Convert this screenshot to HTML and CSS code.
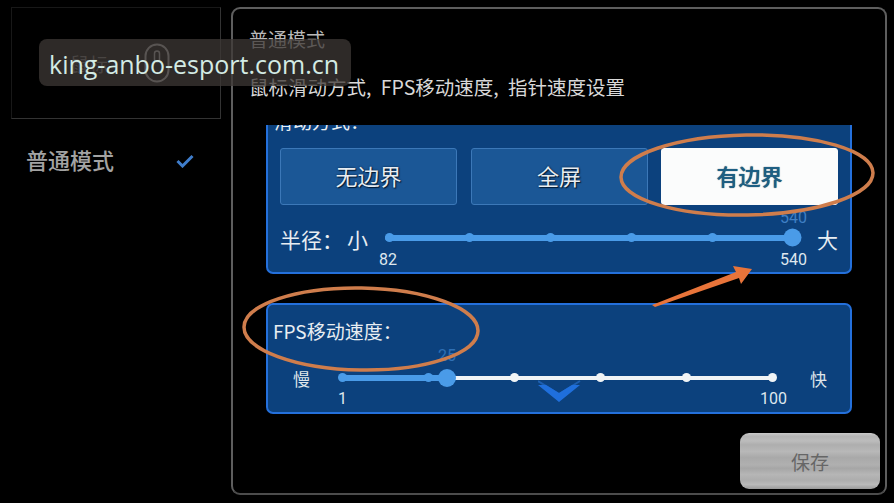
FILE: index.html
```html
<!DOCTYPE html>
<html lang="zh">
<head>
<meta charset="utf-8">
<title>普通模式</title>
<link rel="stylesheet" href="styles.css">
</head>
<body>
<div class="page">
  <aside class="side">
    <div class="side-box">
      <span class="side-box-label">鼠标</span>
      <svg class="mouse-icon" width="26" height="40" viewBox="0 0 26 40"><rect x="1.5" y="1.5" width="23" height="37" rx="11.5" fill="none" stroke="#a8a8a8" stroke-width="2"/><rect x="10.5" y="8" width="5" height="11" rx="2.5" fill="none" stroke="#a8a8a8" stroke-width="1.5"/></svg>
    </div>
    <div class="side-item">
      <span>普通模式</span>
      <svg width="18" height="14" viewBox="0 0 18 14"><path d="M1.5 7 L6.5 12 L16.5 2" fill="none" stroke="#3f7dcb" stroke-width="3"/></svg>
    </div>
  </aside>
  <main class="panel">
    <header class="panel-head">
      <h1 class="panel-title">普通模式</h1>
      <p class="panel-desc">鼠标滑动方式, FPS移动速度, 指针速度设置</p>
    </header>
    <div class="scroll">
      <section class="card card-mode">
        <div class="card-label">滑动方式：</div>
        <div class="mode-buttons">
          <div class="mode-btn">无边界</div>
          <div class="mode-btn">全屏</div>
          <div class="mode-btn mode-btn-on">有边界</div>
        </div>
        <div class="slider-grid radius-grid">
          <div class="slider-side radius-side"><span>半径：</span><span>小</span></div>
          <div class="track track-blue">
            <i class="tick"></i><i class="tick"></i><i class="tick"></i><i class="tick"></i><i class="tick"></i><i class="tick tick-end"></i>
            <span class="bubble bubble-end">540</span>
          </div>
          <div class="slider-end">大</div>
          <div class="values radius-values"><span>82</span><span>540</span></div>
        </div>
      </section>
      <section class="card card-fps">
        <svg class="chevron" width="44" height="24" viewBox="0 0 44 24"><path d="M0 1 L21 14 L42 1" fill="none" stroke="#1d5fb0" stroke-width="2"/><path d="M0 5 L21 22 L42 5 L34 5 L21 13 L8 5 Z" fill="#1f6fdc"/></svg>
        <div class="card-label fps-label">FPS移动速度：</div>
        <div class="slider-grid fps-grid">
          <div class="slider-side slow">慢</div>
          <div class="track track-white">
            <div class="track-fill" style="width:105px"></div>
            <i class="tick tick-b"></i><i class="tick tick-b"></i><i class="tick"></i><i class="tick"></i><i class="tick"></i><i class="tick"></i>
            <i class="knob" style="left:105px"></i>
            <span class="bubble bubble-fps" style="left:105px">25</span>
          </div>
          <div class="slider-end fast">快</div>
          <div class="values fps-values"><span>1</span><span>100</span></div>
        </div>
      </section>
      <div class="save-row"><div class="save-btn">保存</div></div>
    </div>
  </main>
</div>
<svg class="annotations" width="894" height="503" viewBox="0 0 894 503">
  <ellipse cx="747" cy="175" rx="126" ry="40" fill="none" stroke="#cf7d4c" stroke-width="3.5" transform="rotate(-1 747 175)"/>
  <ellipse cx="361" cy="329" rx="117" ry="41" fill="none" stroke="#cf7d4c" stroke-width="3.5" transform="rotate(1 361 329)"/>
  <path d="M652 305 L736 272 L733 266 L752 269 L741 284 L739 278 L655 307 Z" fill="#e8743a"/>
</svg>
<div class="watermark">king-anbo-esport.com.cn</div>
</body>
</html>
```

FILE: styles.css
```css
* { box-sizing: border-box; }
html, body { margin: 0; padding: 0; }
body {
  width: 894px;
  height: 503px;
  overflow: hidden;
  position: relative;
  background: #000;
  color: #e6e9ec;
  font-family: "Noto Sans CJK SC", "Noto Sans", sans-serif;
}
.page {
  display: flex;
  gap: 10px;
  width: 894px;
  height: 503px;
  padding: 7px 7px 8px 11px;
}
.side { width: 210px; flex: none; }
.side-box {
  height: 112px;
  border: 1px solid #181818;
  border-right-color: #333;
  border-bottom-color: #333;
  display: flex;
  align-items: center;
  padding: 0 0 0 58px;
  gap: 36px;
  color: #6d6d6d;
  font-size: 19px;
}
.mouse-icon { flex: none; }
.side-item {
  margin-top: 27px;
  padding: 0 27px 0 15px;
  display: flex;
  align-items: center;
  justify-content: space-between;
  font-size: 22px;
  line-height: 26px;
  font-weight: 500;
  color: #a3a3a3;
}
.side-item svg { margin-top: 4px; }
.panel {
  flex: 1;
  min-width: 0;
  border: 2px solid #5e5e5e;
  border-bottom-color: #4c4c4c;
  border-radius: 9px;
  display: flex;
  flex-direction: column;
}
.panel-head { height: 116px; flex: none; padding: 18px 0 0 16px; }
.panel-title {
  margin: 0;
  font-size: 19px;
  line-height: 24px;
  font-weight: 400;
  color: #b9b9b9;
}
.panel-desc {
  margin: 24px 0 0;
  font-size: 19.5px;
  line-height: 24px;
  word-spacing: 5px;
  color: #d8d8d8;
}
.scroll { flex: 1; min-height: 0; overflow: hidden; }
.card {
  position: relative;
  width: 586px;
  margin-left: 33px;
  background: #0c417d;
  border: 2px solid #2470dc;
  border-radius: 7px;
}
.card-mode { height: 177px; margin-top: -28px; padding: 10px 12px 0; }
.card-label { font-size: 19px; line-height: 24px; color: #e8edf2; margin-left: -6px; }
.mode-buttons {
  display: grid;
  grid-template-columns: repeat(3, 1fr);
  column-gap: 13.5px;
  margin-top: 15px;
}
.mode-btn {
  height: 57px;
  padding-bottom: 4px;
  display: flex;
  align-items: center;
  justify-content: center;
  background: #1b5796;
  border: 1px solid #3c78b8;
  border-radius: 3px;
  font-size: 22px;
  color: #e8edf2;
  text-shadow: 0 0 2px #031a33, 1px 1px 1px #031a33;
}
.mode-btn-on {
  background: #fbfcfc;
  border-color: #fbfcfc;
  color: #1d5f84;
  font-weight: 500;
  text-shadow: 0 0 1px #0c3147;
}
.slider-grid { display: grid; align-items: center; }
.radius-grid { grid-template-columns: 105px 408px 45px; margin-top: 18px; }
.fps-grid { grid-template-columns: 69px 431px 1fr; margin-top: 23px; }
.slider-side, .slider-end { line-height: 26px; }
.radius-grid .slider-side, .radius-grid .slider-end { font-size: 21px; padding-top: 3px; color: #e8edf2; }
.radius-side { display: flex; gap: 4px; }
.slider-end { text-align: right; }
.slow, .fast { font-size: 17px; line-height: 20px; padding-top: 3px; color: #dfe5ea; }
.slow { padding-left: 20px; }
.fast { text-align: left; padding-left: 37px; }
.track { position: relative; height: 6px; display: flex; align-items: center; justify-content: space-between; border-radius: 3px; }
.track-blue { background: #4a9be8; padding-left: 4px; }
.track-white { background: #f1f4f6; height: 4px; margin: 8px 0; }
.track-fill { position: absolute; left: 0; top: -1px; height: 6px; background: #4a9be8; border-radius: 3px; }
.tick { position: relative; flex: none; width: 9px; height: 9px; margin: 0 -4.5px; border-radius: 50%; background: #4a9be8; }
.track-white .tick { background: #f1f4f6; }
.track-blue .tick-end { transform: scale(2); }
.track-white .tick-b { background: #4a9be8; }
.knob {
  position: absolute;
  top: 50%;
  width: 18px;
  height: 18px;
  margin: -9px 0 0 -9px;
  border-radius: 50%;
  background: #4a9be8;
}
.bubble { position: absolute; font-family: "Roboto", "Noto Sans", sans-serif; font-size: 16px; line-height: 18px; color: #3f7fc4; }
.bubble-end { right: -14px; top: -26px; }
.bubble-fps { top: -29px; transform: translateX(-50%); color: #2f70b5; }
.values {
  grid-column: 2;
  display: flex;
  justify-content: space-between;
  font-family: "Roboto", "Noto Sans", sans-serif;
  font-size: 16px;
  line-height: 18px;
  color: #dfe7ee;
}
.radius-values { margin: -1px -14px 0 -6px; }
.fps-values { margin: 1px -14px 0 -4px; }
.card-fps { height: 111px; margin-top: 29px; padding: 14px 0 0 5px; }
.fps-label { margin-left: 0; }
.chevron { position: absolute; left: 270px; top: 75px; }
.save-row { display: flex; justify-content: flex-end; margin-top: 19px; padding-right: 5px; }
.save-btn {
  width: 140px;
  height: 56px;
  display: flex;
  align-items: center;
  justify-content: center;
  border-radius: 9px;
  font-size: 19px;
  color: #666;
  background: linear-gradient(180deg, #c9c9c9 0%, #b4b4b4 6%, #bcbcbc 14%, #aeaeae 21%, #b8b8b8 33%, #a9a9a9 44%, #b0b0b0 57%, #a6a6a6 63%, #b6b6b6 74%, #adadad 84%, #bababa 92%, #9a9a9a 100%);
}
.annotations { position: absolute; left: 0; top: 0; pointer-events: none; }
.watermark {
  position: absolute;
  left: 39px;
  top: 39px;
  width: 312px;
  height: 47px;
  padding-left: 10px;
  border-radius: 8px;
  background: rgba(62, 56, 53, 0.75);
  color: #d3ebe4;
  font-family: "Open Sans", "Noto Sans", sans-serif;
  font-size: 25px;
  line-height: 51px;
  white-space: nowrap;
}
```
